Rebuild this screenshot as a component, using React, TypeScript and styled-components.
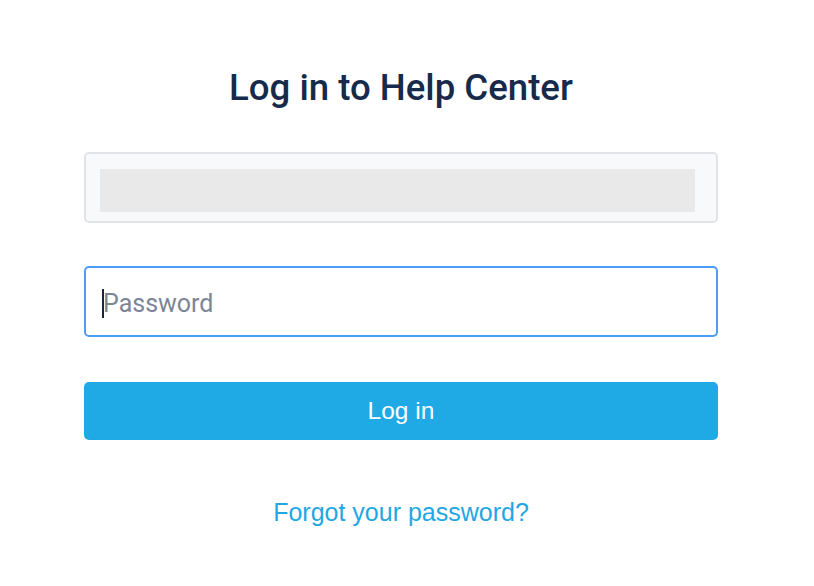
import React from "react";
import { createGlobalStyle, styled } from "styled-components";

const GlobalStyle = createGlobalStyle`
  html, body {
    margin: 0;
    padding: 0;
    background: #ffffff;
  }
  body {
    font-family: "Liberation Sans", Arial, sans-serif;
  }
`;

const Page = styled.div`
  width: 814px;
  min-height: 586px;
  padding: 66px 0 0 84px;
  box-sizing: border-box;
`;

const Form = styled.form`
  width: 634px;
  display: flex;
  flex-direction: column;
`;

const Title = styled.h1`
  margin: 0 0 42px;
  font-family: Roboto, "Liberation Sans", sans-serif;
  font-size: 36.6px;
  line-height: 44px;
  font-weight: 500;
  color: #172a4c;
  text-align: center;
`;

const Field = styled.div<{ $focused?: boolean; $filled?: boolean }>`
  height: 71px;
  box-sizing: border-box;
  border: 2px solid ${props => props.$focused ? "#4d9cf6" : "#e1e3e8"};
  border-radius: 5px;
  background: ${props => props.$filled ? "#f8f9fb" : "#ffffff"};
  display: flex;
  align-items: center;
  padding: ${props => props.$focused ? "3px 16px 0" : "0 16px"};
  margin-bottom: ${props => props.$focused ? "45px" : "43px"};
`;

const Autofill = styled.div`
  flex: 1;
  height: 43px;
  margin: 3px 5px -3px -2px;
  background: #e9e9e9;
`;

const Caret = styled.span`
  width: 2px;
  height: 29px;
  background: #152447;
  margin-right: -1px;
`;

const Placeholder = styled.span`
  font-family: Roboto, "Liberation Sans", sans-serif;
  font-size: 25px;
  color: #7c8598;
`;

const Button = styled.button`
  height: 58px;
  border: none;
  border-radius: 5px;
  background: #1fa9e5;
  color: #ffffff;
  font-family: "Liberation Sans", Arial, sans-serif;
  font-size: 24.5px;
  cursor: pointer;
  padding: 0;
`;

const ForgotLink = styled.a`
  margin-top: 58px;
  align-self: center;
  font-size: 25px;
  line-height: 28px;
  color: #1fa7e3;
  text-decoration: none;
`;

export default function App() {
  return (
    <>
      <GlobalStyle />
      <Page>
        <Form onSubmit={e => e.preventDefault()}>
          <Title>Log in to Help Center</Title>
          <Field $filled>
            <Autofill />
          </Field>
          <Field $focused>
            <Caret />
            <Placeholder>Password</Placeholder>
          </Field>
          <Button type="submit">Log in</Button>
          <ForgotLink href="#">Forgot your password?</ForgotLink>
        </Form>
      </Page>
    </>
  );
}
